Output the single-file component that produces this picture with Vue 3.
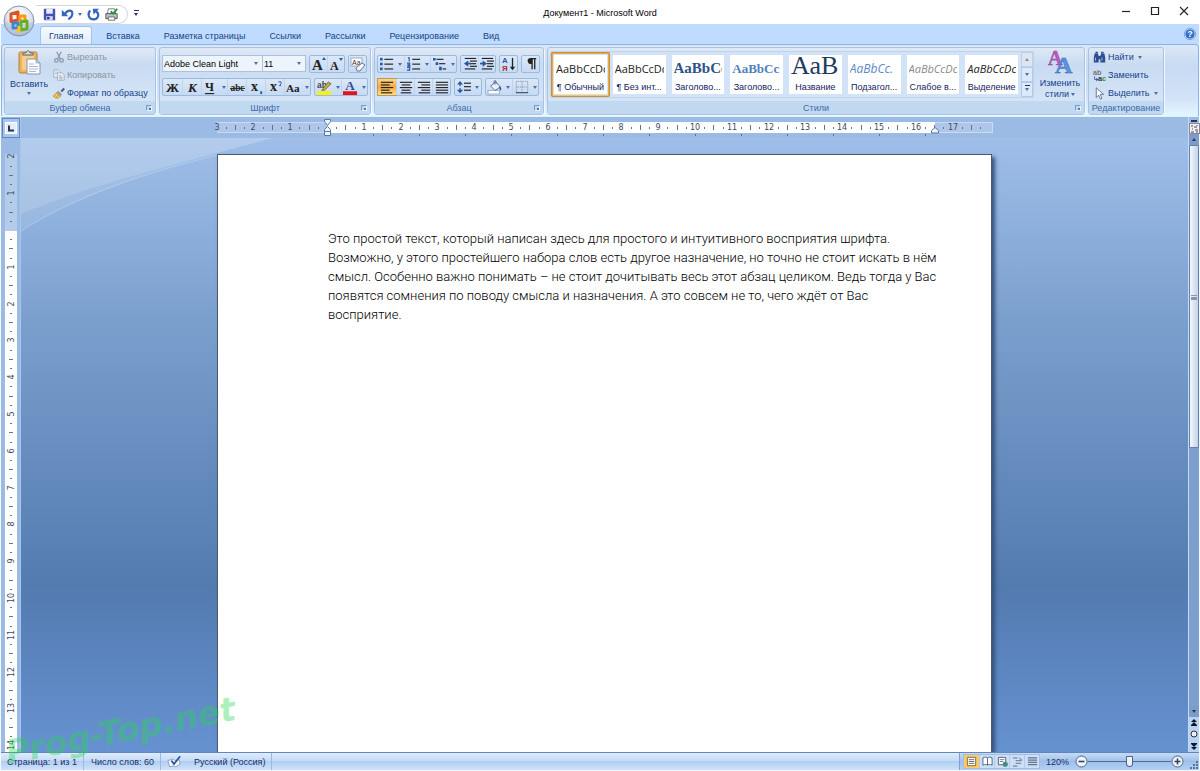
<template>
  <div class="word-window">
    <header class="title-bar">
      <button class="office-button" aria-label="Office">
        <svg viewBox="0 0 32 32" width="32" height="32" v-html="icons.office"></svg>
      </button>
      <div class="quick-access">
        <button v-for="item in quickItems" :key="item.label" :class="item.cls" :aria-label="item.label">
          <svg viewBox="0 0 16 16" width="13" height="13" v-html="icons[item.icon]"></svg>
          <i v-if="item.menu" class="arrow"></i>
        </button>
      </div>
      <button class="quick-more" aria-label="Настройка панели быстрого доступа"><i class="arrow dark barred"></i></button>
      <h1 class="title">Документ1 - Microsoft Word</h1>
      <div class="window-buttons">
        <button v-for="name in ['minimize', 'maximize', 'close']" :key="name" :aria-label="name">
          <svg viewBox="0 0 10 10" width="10" height="10" v-html="icons[name]"></svg>
        </button>
      </div>
    </header>

    <nav class="tabs">
      <button
        v-for="tab in tabs"
        :key="tab"
        class="tab"
        :class="{ active: tab === activeTab }"
        @click="activeTab = tab"
      >{{ tab }}</button>
      <button class="help" aria-label="Справка">
        <svg viewBox="0 0 12 12" width="12" height="12" v-html="icons.help"></svg>
      </button>
    </nav>

    <section class="ribbon">
      <div class="group clipboard">
        <div class="group-body">
          <button class="big-button">
            <svg viewBox="0 0 24 26" width="24" height="26" v-html="icons.paste"></svg>
            <span>Вставить</span>
            <i class="arrow"></i>
          </button>
          <div class="small-buttons">
            <button disabled><svg viewBox="0 0 16 16" width="12" height="12" v-html="icons.cut"></svg>Вырезать</button>
            <button disabled><svg viewBox="0 0 16 16" width="12" height="12" v-html="icons.copy"></svg>Копировать</button>
            <button><svg viewBox="0 0 16 16" width="12" height="12" v-html="icons.brush"></svg>Формат по образцу</button>
          </div>
        </div>
        <div class="group-label">Буфер обмена<i class="launcher"></i></div>
      </div>

      <div class="group font">
        <div class="group-body rows">
          <div class="row">
            <div class="combos">
              <label class="combo family">
                <select v-model="fontFamily" aria-label="Шрифт">
                  <option>Adobe Clean Light</option>
                </select>
                <i class="arrow"></i>
              </label>
              <label class="combo size">
                <select v-model="fontSize" aria-label="Размер шрифта">
                  <option>11</option>
                </select>
                <i class="arrow"></i>
              </label>
            </div>
            <div v-for="(set, n) in fontTop" :key="n" class="button-set">
              <button v-for="b in set" :key="b.icon" :class="b.cls" :aria-label="b.icon">
                <svg viewBox="0 0 16 16" width="16" height="16" v-html="icons[b.icon]"></svg>
              </button>
            </div>
          </div>
          <div class="row">
            <div v-for="(set, n) in fontBottom" :key="n" class="button-set">
              <button v-for="b in set" :key="b.icon" :class="b.cls" :aria-label="b.icon">
                <svg viewBox="0 0 16 16" width="15" height="15" v-html="icons[b.icon]"></svg>
                <i v-if="b.menu" class="arrow"></i>
              </button>
            </div>
          </div>
        </div>
        <div class="group-label">Шрифт<i class="launcher"></i></div>
      </div>

      <div class="group paragraph">
        <div class="group-body rows">
          <div v-for="(row, r) in paragraphRows" :key="r" class="row">
            <div v-for="(set, n) in row" :key="n" class="button-set">
              <button v-for="b in set" :key="b.icon" :class="b.cls" :aria-label="b.icon">
                <svg viewBox="0 0 16 16" width="14" height="14" v-html="icons[b.icon]"></svg>
                <i v-if="b.menu" class="arrow"></i>
              </button>
            </div>
          </div>
        </div>
        <div class="group-label">Абзац<i class="launcher"></i></div>
      </div>

      <div class="group styles">
        <div class="group-body">
          <div class="gallery">
            <button
              v-for="(style, n) in styles"
              :key="n"
              class="style-item"
              :class="{ selected: n === activeStyle }"
              @click="activeStyle = n"
            >
              <span class="card">
                <span class="sample" :class="style.cls">{{ style.sample }}</span>
                <span class="name">{{ style.name }}</span>
              </span>
            </button>
            <div class="gallery-scroll">
              <button aria-label="Вверх" disabled><i class="arrow up"></i></button>
              <button aria-label="Вниз"><i class="arrow"></i></button>
              <button aria-label="Ещё"><i class="arrow barred"></i></button>
            </div>
          </div>
          <button class="big-button change">
            <svg viewBox="0 0 26 26" width="26" height="26" v-html="icons.changeStyles"></svg>
            <span>Изменить</span>
            <span>стили<i class="arrow"></i></span>
          </button>
        </div>
        <div class="group-label">Стили<i class="launcher"></i></div>
      </div>

      <div class="group editing">
        <div class="group-body">
          <div class="small-buttons">
            <button><svg viewBox="0 0 16 16" width="13" height="13" v-html="icons.find"></svg>Найти<i class="arrow"></i></button>
            <button><svg viewBox="0 0 16 16" width="13" height="13" v-html="icons.replace"></svg>Заменить</button>
            <button><svg viewBox="0 0 16 16" width="13" height="13" v-html="icons.pointer"></svg>Выделить<i class="arrow"></i></button>
          </div>
        </div>
        <div class="group-label">Редактирование</div>
      </div>
    </section>

    <main class="workspace">
      <aside class="left-ruler">
        <button class="tab-stop" aria-label="Табуляция">
          <svg viewBox="0 0 12 12" width="12" height="12" v-html="icons.tabStop"></svg>
        </button>
        <svg class="v-ruler" width="12">
          <rect width="12" height="77" fill="#b4cbea" />
          <rect y="77" width="12" height="100%" fill="#fff" />
          <g v-for="m in verticalMarks" :key="m.pos">
            <text v-if="m.text" text-anchor="middle" :transform="`translate(9 ${m.pos}) rotate(-90)`">{{ m.text }}</text>
            <rect v-else :x="m.half ? 4 : 5" :y="m.pos" :width="m.half ? 4 : 2" height="1" fill="#66758f" />
          </g>
        </svg>
      </aside>

      <div class="center">
        <div class="top-ruler">
          <svg width="776" height="20" viewBox="0 0 776 20">
            <rect x="0" y="5" width="776" height="11" fill="#c9dbf3" />
            <rect x="0" y="6" width="775" height="9" fill="#aec7e9" />
            <rect x="110" y="5" width="608" height="11" fill="#fff" />
            <g v-for="m in horizontalMarks" :key="m.pos">
              <text v-if="m.text" :x="m.pos" y="13" text-anchor="middle">{{ m.text }}</text>
              <rect v-else :x="m.pos" :y="m.half ? 8 : 10" width="1" :height="m.half ? 5 : 2" fill="#66758f" />
            </g>
            <rect v-for="t in tabTicks" :key="t" :x="t" y="17" width="1" height="2" fill="#5c7396" />
            <g fill="#eef4fc" stroke="#5c78a8">
              <path d="M107.500 2.500h6v2l-3 4-3-4z" />
              <path d="M110.500 9.500l3 3v2h-6v-2z" />
              <path d="M107.500 14.500h6v4h-6z" />
              <path d="M718 10.500l3.500 3v2.500h-7v-2.500z" />
            </g>
          </svg>
        </div>
        <div class="canvas">
          <svg class="swoosh" width="260" height="100" viewBox="0 0 260 100">
            <path d="M0 0H252C150 27 60 55 0 93z" fill="#fff" opacity=".1" />
            <path d="M0 0H252C150 27 70 47 0 76z" fill="#fff" opacity=".13" />
            <path d="M0 93C55 58 120 36 200 16" fill="none" stroke="#c3d7f2" opacity=".5" />
          </svg>
          <article class="page">
            <p><span v-for="line in lines" :key="line">{{ line }}</span></p>
          </article>
        </div>
      </div>

      <aside class="scroll-column">
        <button class="split" aria-label="Разделить"></button>
        <button class="ruler-toggle" aria-label="Линейка">
          <svg viewBox="0 0 11 11" width="11" height="11" v-html="icons.rulerToggle"></svg>
        </button>
        <button class="scroll-arrow" aria-label="Прокрутить вверх"><i class="arrow dark up"></i></button>
        <div class="track">
          <div class="thumb"><i></i></div>
        </div>
        <button class="scroll-arrow" aria-label="Прокрутить вниз"><i class="arrow dark"></i></button>
        <div class="browse">
          <button v-for="name in ['prevPage', 'browseObject', 'nextPage']" :key="name" :aria-label="name">
            <svg viewBox="0 0 8 8" width="8" height="8" v-html="icons[name]"></svg>
          </button>
        </div>
      </aside>
    </main>

    <footer class="status-bar">
      <button class="status-cell">Страница: 1 из 1</button>
      <button class="status-cell words">Число слов: 60</button>
      <button class="status-cell language">
        <svg viewBox="0 0 16 14" width="14" height="13" v-html="icons.proof"></svg>
        Русский (Россия)
      </button>
      <div class="status-right">
        <div class="views">
          <button
            v-for="(view, n) in views"
            :key="view"
            :class="{ selected: n === 0 }"
            :aria-label="view"
          >
            <svg viewBox="0 0 12 12" width="11" height="11" v-html="icons[view]"></svg>
          </button>
        </div>
        <button class="percent">{{ zoom }}%</button>
        <button class="zoom-button" aria-label="Уменьшить" @click="zoom -= 10">
          <svg viewBox="0 0 13 13" width="13" height="13" v-html="icons.minus"></svg>
        </button>
        <input v-model.number="zoom" class="zoom-slider" type="range" min="40" max="200" aria-label="Масштаб" />
        <button class="zoom-button" aria-label="Увеличить" @click="zoom += 10">
          <svg viewBox="0 0 13 13" width="13" height="13" v-html="icons.plus"></svg>
        </button>
        <svg class="grip" viewBox="0 0 9 9" width="9" height="9" v-html="icons.grip"></svg>
      </div>
    </footer>

    <div class="watermark">Prog-Top.net</div>
  </div>
</template>

<script setup>
import { ref } from 'vue'

const tabs = ['Главная', 'Вставка', 'Разметка страницы', 'Ссылки', 'Рассылки', 'Рецензирование', 'Вид']
const activeTab = ref('Главная')
const activeStyle = ref(0)
const fontFamily = ref('Adobe Clean Light')
const fontSize = ref('11')
const zoom = ref(120)

const quickItems = [
  { label: 'Сохранить', icon: 'save' },
  { label: 'Отменить', icon: 'undo', menu: true, cls: 'undo' },
  { label: 'Повторить', icon: 'redo' },
  { label: 'Быстрая печать', icon: 'print' }
]

const fontTop = [
  [{ icon: 'grow' }, { icon: 'shrink' }],
  [{ icon: 'clearFormat' }]
]

const fontBottom = [
  [
    { icon: 'bold' },
    { icon: 'italic' },
    { icon: 'underline', menu: true, cls: 'menu' },
    { icon: 'strike' },
    { icon: 'sub' },
    { icon: 'sup' },
    { icon: 'changeCase', menu: true, cls: 'menu' }
  ],
  [
    { icon: 'highlight', menu: true, cls: 'menu' },
    { icon: 'fontColor', menu: true, cls: 'menu' }
  ]
]

const paragraphRows = [
  [
    [
      { icon: 'bullets', menu: true, cls: 'menu' },
      { icon: 'numbers', menu: true, cls: 'menu' },
      { icon: 'multilevel', menu: true, cls: 'menu' }
    ],
    [{ icon: 'outdent' }, { icon: 'indent' }],
    [{ icon: 'sort' }],
    [{ icon: 'marks' }]
  ],
  [
    [
      { icon: 'alignLeft', cls: 'selected' },
      { icon: 'alignCenter' },
      { icon: 'alignRight' },
      { icon: 'justify' }
    ],
    [{ icon: 'spacing', menu: true, cls: 'menu' }],
    [
      { icon: 'fill', menu: true, cls: 'menu' },
      { icon: 'borders', menu: true, cls: 'menu' }
    ]
  ]
]

const styles = [
  { sample: 'AaBbCcDc', name: '¶ Обычный', cls: 'plain' },
  { sample: 'AaBbCcDc', name: '¶ Без инт...', cls: 'plain' },
  { sample: 'AaBbCс', name: 'Заголово...', cls: 'heading1' },
  { sample: 'AaBbCc', name: 'Заголово...', cls: 'heading2' },
  { sample: 'АаВ', name: 'Название', cls: 'heading0' },
  { sample: 'AaBbCc.', name: 'Подзагол...', cls: 'subtitle' },
  { sample: 'AaBbCcDc', name: 'Слабое в...', cls: 'weak' },
  { sample: 'AaBbCcDc', name: 'Выделение', cls: 'emphasis' }
]

const lines = [
  'Это простой текст, который написан здесь для простого и интуитивного восприятия шрифта.',
  'Возможно, у этого простейшего набора слов есть другое назначение, но точно не стоит искать в нём',
  'смысл. Особенно важно понимать – не стоит дочитывать весь этот абзац целиком. Ведь тогда у Вас',
  'появятся сомнения по поводу смысла и назначения. А это совсем не то, чего ждёт от Вас',
  'восприятие.'
]

const views = ['viewPage', 'viewRead', 'viewWeb', 'viewOutline', 'viewDraft']

// деления линейки: цифра на сантиметре, штрих на половине, точки на четвертях
const CM = 36.8

function makeMarks(zero, from, to) {
  const marks = []
  for (let q = from; q <= to; q++) {
    if (q === 0) continue
    const pos = Math.round(zero + (q * CM) / 4)
    marks.push({
      pos,
      text: q % 4 === 0 ? String(Math.abs(q / 4)) : '',
      half: q % 2 === 0
    })
  }
  return marks
}

const horizontalMarks = makeMarks(110, -12, 71)
const verticalMarks = makeMarks(76, -8, 120)
const tabTicks = Array.from({ length: 13 }, (_, n) => Math.round(110 + (n + 1) * 46))

const bars = (rows, color = '#222') =>
  rows.map(([x, y, w]) => `<rect x="${x}" y="${y}" width="${w}" height="1.300" fill="${color}"/>`).join('')

const glyph = (text, x, y, size, extra = '') =>
  `<text x="${x}" y="${y}" font-size="${size}" font-family="Liberation Serif, serif" fill="#222" ${extra}>${text}</text>`

const icons = {
  office: `<defs><radialGradient id="orb" cx=".5" cy=".3" r=".75"><stop offset="0" stop-color="#fff"/><stop offset=".55" stop-color="#dfe5ee"/><stop offset="1" stop-color="#93a4be"/></radialGradient></defs>
    <circle cx="16" cy="16" r="15" fill="url(#orb)" stroke="#8393ae"/>
    <path d="M3 17a13 13 0 0 0 26 0c-7 3-19 3-26 0z" fill="#b7c6dd" opacity=".6"/>
    <g fill="none" stroke-width="3" stroke-linejoin="round">
    <path d="M8 9l7-2v8l-7 1.500z" stroke="#e0521d"/><path d="M17 11h5v5h-5z" stroke="#f39c1c"/>
    <path d="M10 18h5v5h-5z" stroke="#3c87d0"/><path d="M18 17l6-1v8l-6 1z" stroke="#68ae27"/>
    <path d="M16 21v5h-3" stroke="#f4c52c"/></g>`,
  save: `<path d="M1 1h14v14H2l-1-1z" fill="#4a51b5"/><path d="M4 1h8v6H4z" fill="#e9edfb"/><path d="M4 10h8v5H4z" fill="#cfd5ee"/><path d="M5 11h3v3H5z" fill="#30378c"/>`,
  undo: `<path d="M1 2v8h8z" fill="#3465c0"/><path d="M5 7c3-5 9-5 9 0 0 3-2 5-5 7" fill="none" stroke="#3465c0" stroke-width="2.600"/>`,
  redo: `<path d="M4 3c-4 4-2 11 4 11s8-7 3-10" fill="none" stroke="#3465c0" stroke-width="2.600"/><path d="M7 1h8l-7 7z" fill="#3465c0"/>`,
  print: `<path d="M4 1h8l1 6H3z" fill="#fff" stroke="#666"/><path d="M1 7h14v6H1z" fill="#bfc3c9" stroke="#444"/><path d="M4 11h8v4H4z" fill="#fff" stroke="#555"/><path d="M7 4l3 3 5-6" fill="none" stroke="#28963a" stroke-width="2.200"/>`,
  minimize: '<path d="M1 5.500h8" stroke="#222" stroke-width="1.200"/>',
  maximize: '<path d="M1.500 1.500h7v7h-7z" fill="none" stroke="#222" stroke-width="1.200"/>',
  close: '<path d="M1 1l8 8M9 1L1 9" stroke="#222" stroke-width="1.100"/>',
  help: `<circle cx="6" cy="6" r="5.200" fill="#2f6fd0" stroke="#e8f1ff"/><circle cx="6" cy="6" r="5.700" fill="none" stroke="#5379b5" stroke-width=".6"/><text x="6" y="9.300" text-anchor="middle" font-size="9" font-weight="bold" font-family="Liberation Sans, sans-serif" fill="#fff">?</text>`,
  paste: `<rect x="2" y="3" width="18" height="21" rx="1.500" fill="#e9b562" stroke="#b98032"/><path d="M5 7h12v14H5z" fill="#f5cf8c"/><path d="M6 6V4h3c0-3 4-3 4 0h3v2z" fill="#d6d9de" stroke="#666d78"/><path d="M10 10h9l4 4v11H10z" fill="#fff" stroke="#8894aa"/><path d="M19 10v4h4z" fill="#ccd6e6" stroke="#8894aa" stroke-width=".7"/><path d="M12 15h5M12 17.500h9M12 20h9M12 22.500h7" stroke="#a7b7d2"/>`,
  cut: `<g fill="none" stroke="#8f9aab" stroke-width="1.800"><path d="M5 1l5 10M11 1L6 11"/><circle cx="4.500" cy="12.500" r="2.300"/><circle cx="11.500" cy="12.500" r="2.300"/></g>`,
  copy: `<g fill="#e8edf5" stroke="#98a4b8"><path d="M1 1h6l3 3v7H1z"/><path d="M6 5h6l3 3v7H6z"/></g><path d="M8 9h3M8 11h5M8 13h5M3 4h3M3 6h2" stroke="#98a4b8"/>`,
  brush: `<path d="M10 5l4-4 2 2-4 4z" fill="#4e5c86"/><path d="M7 5l5 5-2 2-5-5z" fill="#8d99c2"/><path d="M5 7l5 5c-1 2-3 3-6 3l-4-3c2-1 3-3 5-5z" fill="#eecb47" stroke="#a37e21" stroke-width=".8"/><path d="M3 11l3 3M5 9l3 3" stroke="#a37e21" stroke-width=".7"/>`,
  grow: glyph('A', 1, 14, 15, 'font-weight="bold"') + '<path d="M11 4l2-3 2 3z" fill="#2b56a8"/>',
  shrink: glyph('A', 2, 14, 12, 'font-weight="bold"') + '<path d="M11 2h4l-2 3z" fill="#2b56a8"/>',
  clearFormat: `<rect x="1" y="2" width="11" height="8" fill="#fff" stroke="#7b8dab" stroke-width=".7"/><text x="2" y="8.500" font-size="7" font-family="Liberation Sans, sans-serif" fill="#333">Aa</text><path d="M6 12l6-5 3 2-5 6H7z" fill="#f6f7fb" stroke="#68779a"/>`,
  bold: glyph('Ж', 8, 13, 14, 'font-weight="bold" text-anchor="middle"'),
  italic: glyph('К', 8, 13, 14, 'font-weight="bold" font-style="italic" text-anchor="middle"'),
  underline: glyph('Ч', 7, 12, 13, 'font-weight="bold" text-anchor="middle"') + '<path d="M2 14.500h10" stroke="#222" stroke-width="1.200"/>',
  strike: glyph('abc', 8, 12, 10, 'text-anchor="middle" font-weight="bold"') + '<path d="M0 9h16" stroke="#222"/>',
  sub: glyph('x', 2, 12, 15, 'font-weight="bold"') + '<path d="M12 12h2v3h-2z" fill="#2b56a8"/>',
  sup: glyph('x', 2, 12, 15, 'font-weight="bold"') + '<path d="M11 2h3v2l-2 2h2" stroke="#2b56a8" fill="none"/>',
  changeCase: glyph('Aa', 0, 13, 12, 'font-weight="bold"'),
  highlight: `<rect x="0" y="12" width="15" height="4" fill="#f9f10a"/><text x="0" y="8" font-size="9" font-weight="bold" font-family="Liberation Sans, sans-serif" fill="#444">ab</text><path d="M5 11l7-9 3 2-7 7z" fill="#c9ad36" stroke="#5c5a48" stroke-width=".8"/>`,
  fontColor: `<rect x="0" y="12" width="15" height="4" fill="#e3121d"/>` + glyph('A', 7.500, 11, 14, 'text-anchor="middle" font-weight="bold"').replace('#222', '#2d4f9c'),
  bullets: '<g fill="#2b56a8"><rect y="1" width="3" height="3"/><rect y="6.500" width="3" height="3"/><rect y="12" width="3" height="3"/></g>' + bars([[5, 2, 10], [5, 7.500, 10], [5, 13, 10]]),
  numbers: '<g stroke="#2b56a8" stroke-width="1.300" fill="none"><path d="M1 1h1.500v4M0 7h3v2H1v1.500h3M0 12h3v3H0"/></g>' + bars([[6, 2, 9], [6, 7.500, 9], [6, 13, 9]]),
  multilevel: '<g fill="#2b56a8"><path d="M0 1h3v3H0zM3 6h3v3H3zM7 11h3v4H7z"/></g>' + bars([[4, 2, 8], [7, 7, 7], [11, 13, 4]]),
  outdent: bars([[2, 1, 13], [8, 4, 8], [8, 7, 7], [8, 10, 8], [2, 13, 12]]) + '<path d="M6 4v7L1 7.500z" fill="#2b56a8"/><path d="M5 7.500h4" stroke="#2b56a8" stroke-width="2"/>',
  indent: bars([[2, 1, 13], [8, 4, 8], [8, 7, 7], [8, 10, 8], [2, 13, 12]]) + '<path d="M3 4v7l5-3.500z" fill="#2b56a8"/><path d="M0 7.500h4" stroke="#2b56a8" stroke-width="2"/>',
  sort: `<g font-family="Liberation Sans, sans-serif" font-size="9" font-weight="bold"><text x="0" y="7" fill="#2b56a8">А</text><text x="0" y="16" fill="#b02a37">Я</text></g><path d="M12 1v12" stroke="#222" stroke-width="1.500"/><path d="M9 11h6l-3 4z" fill="#222"/>`,
  marks: '<path d="M7 1h7v1.500h-1V14h-1.500V2.500H10V14H8.500V8a3.500 3.500 0 0 1-1.500-7z" fill="#222"/>',
  alignLeft: bars([[1, 2, 14], [1, 5, 10], [1, 8, 14], [1, 11, 10], [1, 14, 13]]),
  alignCenter: bars([[1, 2, 14], [3, 5, 10], [1, 8, 14], [3, 11, 10], [2, 14, 12]]),
  alignRight: bars([[1, 2, 14], [5, 5, 10], [1, 8, 14], [5, 11, 10], [2, 14, 13]]),
  justify: bars([[1, 2, 14], [1, 5, 14], [1, 8, 14], [1, 11, 14], [1, 14, 14]]),
  spacing: bars([[8, 3, 8], [8, 7, 8], [8, 11, 8]]) + '<path d="M3.500 3v10" stroke="#2b56a8" stroke-width="1.400" stroke-dasharray="4 2"/><path d="M0 5l3.500-4L7 5zM0 11h7l-3.500 4z" fill="#2b56a8"/>',
  fill: '<rect x="0" y="12" width="13" height="4" fill="#fff" stroke="#8b99b3" stroke-width=".8"/><path d="M3 7l6-5 5 6-6 4z" fill="#eaf0f9" stroke="#4f658f"/><path d="M7 5V1h2v4" fill="none" stroke="#4f658f"/><path d="M13 7c2 1 3 3 1.500 5-1.500-1-2-3-1.500-5z" fill="#2b56a8"/>',
  borders: '<g fill="none" stroke="#6f7f9c"><path d="M1.500 1.500h13v13h-13z" stroke-dasharray="1 1"/><path d="M8 2v12M2 8h12" stroke-dasharray="1 1"/><path d="M1 14.500h14" stroke="#333"/></g>',
  changeStyles: `<g font-family="Liberation Serif, serif" font-weight="bold"><text x="1" y="16" font-size="20" fill="#b75bc0" stroke="#8c3c98" stroke-width=".4">A</text><text x="8" y="24" font-size="24" fill="#5c93e0" stroke="#3765b4" stroke-width=".5">A</text></g>`,
  find: '<g fill="#2c4f91"><path d="M2 3h4l1 3v8H1V8zM10 3h4l1 5v6H9V6z"/><path d="M6 6h4v4H6zM3 1h3v2H3zM10 1h3v2h-3z"/></g><path d="M3 8v4M11 8v4" stroke="#b8cdf0"/>',
  replace: `<g font-family="Liberation Sans, sans-serif" font-weight="bold" font-size="9"><text x="0" y="7" fill="#777">ab</text><text x="6" y="15" fill="#333">a<tspan fill="#259a35">c</tspan></text></g><path d="M2 9v4h3" fill="none" stroke="#2b56a8"/><path d="M4 11l3 2-3 2z" fill="#2b56a8"/>`,
  pointer: '<path d="M4 1v12l3-3 2 5 2-1-2-5h4z" fill="#fff" stroke="#4f6187"/>',
  tabStop: '<rect x=".5" y=".5" width="11" height="11" fill="#e4eefb" stroke="#fff"/><path d="M4 3.500v5h5" fill="none" stroke="#27344c" stroke-width="2"/>',
  rulerToggle: '<rect x=".5" y=".5" width="10" height="10" fill="#f3f1f4" stroke="#8c8792"/><path d="M2 3h2M5 4h3M3 6h1M6 7h3M2 9h3M8 2v1M7 9h2" stroke="#4d4750"/>',
  prevPage: '<path d="M4 0l3 3H1zM4 3l3 3H1zM1 6h6v1H1z" fill="#101828"/>',
  browseObject: '<circle cx="4" cy="4" r="3" fill="#e9eef5" stroke="#333"/>',
  nextPage: '<path d="M1 1h6v1H1zM1 2h6L4 5zM1 5h6L4 8z" fill="#101828"/>',
  proof: '<path d="M1 6l6-2 2 2 5-1 1 5-5 3-3-1-4 1z" fill="#f5f7fb" stroke="#7586a3" stroke-width=".8"/><path d="M5 6l3 4 7-9" fill="none" stroke="#2b56a8" stroke-width="2"/>',
  viewPage: '<path d="M1.500 1.500h9v9h-9z" fill="#fff" stroke="#7a6a3c"/><path d="M3 4h6M3 6h6M3 8h6" stroke="#666"/>',
  viewRead: '<path d="M1 2c2-1 4-1 5 0 1-1 3-1 5 0v8c-2-1-4-1-5 0-1-1-3-1-5 0z" fill="#fff" stroke="#4a5c7c"/><path d="M6 2v8" stroke="#4a5c7c"/>',
  viewWeb: '<path d="M1.500 1.500h8v8h-8z" fill="#fff" stroke="#4a5c7c"/><path d="M3 4h5M3 6h4" stroke="#777"/><circle cx="9" cy="9" r="2.800" fill="#3d8e85"/>',
  viewOutline: '<path d="M1 2h5M4 5h6M4 8h6M1 11h5M8 2l3 3" stroke="#7c8aa2" stroke-width="1.200"/>',
  viewDraft: '<path d="M1 2h10M1 4.500h10M1 7h10M1 9.500h10" stroke="#66738c" stroke-width="1.300"/>',
  minus: '<circle cx="6.500" cy="6.500" r="5.500" fill="#eef4fc" stroke="#4f6384"/><path d="M3.500 6.500h6" stroke="#33435f" stroke-width="1.600"/>',
  plus: '<circle cx="6.500" cy="6.500" r="5.500" fill="#eef4fc" stroke="#4f6384"/><path d="M3.500 6.500h6M6.500 3.500v6" stroke="#33435f" stroke-width="1.600"/>',
  grip: '<path d="M7 1h2v2H7zM4 4h2v2H4zM7 4h2v2H7zM1 7h2v2H1zM4 7h2v2H4zM7 7h2v2H7z" fill="#5c7396"/>'
}
</script>

<style>
body {
  margin: 0;
}
</style>

<style scoped>
.word-window {
  position: relative;
  display: flex;
  flex-direction: column;
  height: 100vh;
  box-sizing: border-box;
  padding: 0 1px 1px;
  overflow: hidden;
  background: #f4f9ff;
  font-family: 'Liberation Sans', sans-serif;
  font-size: 9px;
  line-height: 12px;
  color: #15428b;
}

button {
  display: flex;
  align-items: center;
  justify-content: center;
  padding: 0;
  border: 0;
  background: none;
  color: inherit;
  font: inherit;
  white-space: nowrap;
}

svg {
  flex: none;
  overflow: visible;
}

.arrow {
  flex: none;
  width: 0;
  height: 0;
  border: 2px solid transparent;
  border-top: 3px solid #4a70ad;
  border-bottom: 0;
}

.arrow.up {
  border-top: 0;
  border-bottom: 3px solid #4a70ad;
}

.arrow.dark {
  border-top-color: #24365c;
}

.arrow.dark.up {
  border-bottom-color: #24365c;
}

.arrow.barred {
  position: relative;
}

.arrow.barred::before {
  content: '';
  position: absolute;
  left: -2px;
  top: -6px;
  width: 5px;
  height: 1px;
  background: #24365c;
}

/* заголовок */
.title-bar {
  position: relative;
  display: flex;
  align-items: center;
  height: 24px;
  margin: 0 -1px;
  background: #fff;
}

.office-button {
  position: absolute;
  z-index: 2;
  left: 3px;
  top: 5px;
}

.quick-access {
  display: flex;
  align-items: center;
  gap: 5px;
  height: 17px;
  margin: 4px 0 0 36px;
  padding: 0 9px 0 7px;
  border: 1px solid #d3d7de;
  border-left: 0;
  border-radius: 0 10px 10px 0;
}

.quick-access .undo {
  gap: 4px;
}

.quick-more {
  width: 16px;
  padding-top: 4px;
}

.title {
  position: absolute;
  left: 0;
  right: 0;
  top: 7px;
  margin: 0 auto;
  width: fit-content;
  color: #000;
  font-size: 9px;
  font-weight: normal;
}

.window-buttons {
  display: flex;
  gap: 19px;
  margin: 0 11px 3px auto;
}

/* вкладки */
.tabs {
  display: flex;
  align-items: flex-end;
  height: 20px;
  padding: 0 3px 0 39px;
  background: #bfdbff;
}

.tab {
  height: 18px;
  padding: 0 11px;
  border: 1px solid transparent;
  border-bottom: 0;
}

.tab.active {
  padding: 0 8px;
  margin-right: 2px;
  border-color: #a5c3ea;
  border-radius: 3px 3px 0 0;
  background: linear-gradient(#f5faff, #e2edfa);
}

.help {
  height: 20px;
  margin-left: auto;
}

/* лента */
.ribbon {
  display: flex;
  gap: 3px;
  height: 73px;
  box-sizing: border-box;
  padding: 2px 2px 1px;
  border: 1px solid #8db2e3;
  border-bottom-color: #d9f4ff;
  border-radius: 3px;
  background: linear-gradient(#dbe7f5, #c7dbf3 30%, #d2e3f8 75%, #e2f6ff);
}

.group {
  display: flex;
  flex-direction: column;
  box-sizing: border-box;
  border: 1px solid #a9c3e4;
  border-radius: 3px;
  background: linear-gradient(#dfe9f6, #c9dbf1 25%, #d9e8f9);
  box-shadow: 1px 1px 0 #f0f7ff;
}

.group-body {
  flex: 1;
  display: flex;
  min-height: 0;
}

.group-label {
  display: flex;
  align-items: center;
  justify-content: center;
  position: relative;
  height: 13px;
  background: #c1d8f1;
  color: #3e6aaa;
}

.launcher {
  position: absolute;
  right: 3px;
  top: 4px;
  width: 4px;
  height: 4px;
  border: 1px solid #7d9bc8;
  border-right-color: #e9f2fd;
  border-bottom-color: #e9f2fd;
}

.launcher::after {
  content: '';
  position: absolute;
  right: 0;
  bottom: 0;
  width: 2px;
  height: 2px;
  background: #5276ae;
}

.clipboard {
  flex: 0 0 152px;
}

.font {
  flex: 0 0 212px;
}

.paragraph {
  flex: 0 0 170px;
}

.styles {
  flex: 0 1 538px;
  min-width: 0;
}

.editing {
  flex: 0 0 76px;
}

.big-button {
  flex-direction: column;
  justify-content: flex-start;
  width: 48px;
  padding-top: 1px;
}

.big-button span {
  margin-top: 3px;
}

.big-button > .arrow {
  margin-top: 2px;
}

.small-buttons {
  display: flex;
  flex-direction: column;
  gap: 6px;
  padding-top: 3px;
}

.small-buttons button {
  justify-content: flex-start;
  gap: 2px;
  height: 12px;
}

.small-buttons button:disabled {
  color: #8d95a3;
}

.small-buttons .arrow {
  margin-left: 2px;
}

.editing .small-buttons {
  padding-left: 4px;
}

.rows {
  flex-direction: column;
  gap: 5px;
  padding: 7px 2px 0;
}

.row {
  display: flex;
  gap: 3px;
  height: 18px;
}

.button-set {
  display: flex;
  box-sizing: border-box;
  border: 1px solid #9cb9de;
  border-radius: 2px;
  background: linear-gradient(#dbe8f8, #c6daf3);
}

.button-set button {
  width: 17px;
}

.button-set button + button {
  border-left: 1px solid #c1d4ee;
}

.paragraph .row:last-child button {
  width: 18px;
}

.font .row:last-child button {
  width: 19px;
}

.button-set button.menu,
.font .row:last-child button.menu,
.paragraph .row:last-child button.menu {
  width: 26px;
  gap: 4px;
}

.button-set .selected {
  background: linear-gradient(#fdd48c, #f9a73c 50%, #fde28a);
  box-shadow: 0 0 0 1px #c2984e;
}

.combos {
  display: flex;
  height: 17px;
}

.combo {
  position: relative;
  display: flex;
  align-items: center;
  box-sizing: border-box;
  border: 1px solid #abc1de;
  background: #eef4fc;
}

.combo select {
  width: 100%;
  padding: 0 1px;
  border: 0;
  appearance: none;
  background: none;
  color: #000;
  font: inherit;
}

.combo .arrow {
  position: absolute;
  right: 4px;
  top: 6px;
}

.combo.family {
  width: 101px;
}

.combo.size {
  width: 44px;
  margin-left: -1px;
}

/* галерея стилей */
.gallery {
  flex: 1;
  display: flex;
  min-width: 0;
  margin: 3px 2px 3px 2px;
  border: 1px solid #c0d3ec;
  border-radius: 2px;
  background: #d3e3f7;
}

.style-item {
  flex: 1;
  min-width: 0;
  align-items: stretch;
  padding: 3px;
}

.style-item.selected {
  padding: 1px;
  border: 2px solid #eea83f;
  border-bottom-color: #f6c659;
  border-radius: 2px;
  outline: 1px solid #c9923e;
  outline-offset: -1px;
}

.card {
  flex: 1;
  display: flex;
  flex-direction: column;
  min-width: 0;
  background: #fff;
  color: #14215c;
}

.sample {
  height: 26px;
  margin: 0 2px;
  overflow: hidden;
  color: #222;
  text-align: left;
  font-family: 'Open Sans', sans-serif;
  font-size: 11px;
  line-height: 27px;
}

.heading1,
.heading2,
.heading0 {
  font-family: 'Liberation Serif', serif;
  font-size: 15px;
  font-weight: bold;
  color: #2e5487;
}

.heading2 {
  font-size: 13px;
  color: #4f81bd;
}

.heading0 {
  font-size: 26px;
  line-height: 22px;
  font-weight: normal;
  color: #1d3a60;
}

.subtitle {
  font-family: 'Open Sans', sans-serif;
  font-size: 12px;
  font-style: italic;
  color: #5a8ac6;
}

.weak {
  font-style: italic;
  color: #8a8a8a;
}

.emphasis {
  font-style: italic;
}

.gallery-scroll {
  display: flex;
  flex-direction: column;
  width: 12px;
}

.gallery-scroll button {
  flex: 1;
  border: 1px solid #b4cae8;
  background: #dce9f9;
}

.gallery-scroll button:disabled {
  background: #e3e6ea;
  opacity: .7;
}

.change span {
  display: flex;
  align-items: center;
  gap: 2px;
  margin-top: 0;
  line-height: 11px;
}

.change svg + span {
  margin-top: 3px;
}

/* рабочая область */
.workspace {
  flex: 1;
  display: flex;
  min-height: 0;
  background: #9cbbe4;
}

.left-ruler {
  display: flex;
  flex-direction: column;
  align-items: center;
  box-sizing: border-box;
  width: 20px;
  border-right: 1px solid #a9c5ea;
}

.tab-stop {
  width: 18px;
  height: 20px;
  margin: 1px 0 16px;
  box-sizing: border-box;
  border: 1px solid #5f86c3;
  background: #a9c5ec;
}

.v-ruler {
  flex: 1;
  min-height: 0;
  overflow: hidden;
}

.v-ruler text,
.top-ruler text {
  font-family: 'DejaVu Sans', sans-serif;
  font-size: 8px;
  fill: #3b4a63;
}

.center {
  flex: 1;
  display: flex;
  flex-direction: column;
  min-width: 0;
}

.top-ruler {
  display: flex;
  justify-content: center;
  height: 21px;
}

.canvas {
  position: relative;
  flex: 1;
  display: flex;
  justify-content: center;
  min-height: 0;
  padding-top: 16px;
  overflow: hidden;
  background: linear-gradient(#9fbfe9, #7b9fcd 30%, #537bb0 73%, #6692d1);
}

.swoosh {
  position: absolute;
  left: 0;
  top: 0;
}

.page {
  position: relative;
  width: 775px;
  box-sizing: border-box;
  padding: 74px 20px 0 110px;
  border: 1px solid #4c5a6e;
  border-bottom: 0;
  background: #fff;
  box-shadow: 3px 3px 4px #34527e;
}

.page p {
  margin: 0;
  color: #000;
  font-family: Roboto, 'Open Sans', sans-serif;
  font-size: 13px;
  font-weight: 300;
  line-height: 19px;
}

.page span {
  display: block;
  white-space: nowrap;
}

/* прокрутка */
.scroll-column {
  display: flex;
  flex-direction: column;
  align-items: stretch;
  width: 10px;
  border-left: 1px solid #c6daf4;
}

.split {
  height: 2px;
  margin: 3px 2px 1px;
  background: #24365c;
}

.scroll-arrow {
  height: 11px;
  background: #7c9cc9;
}

.track {
  flex: 1;
  display: flex;
  flex-direction: column;
  background: #7d9fce;
}

.thumb {
  display: flex;
  align-items: center;
  justify-content: center;
  height: 54%;
  box-sizing: border-box;
  border: 1px solid #6480ac;
  border-radius: 1px;
  background: linear-gradient(90deg, #f4f8fd, #dbe5f2 50%, #c4d3e8);
}

.thumb i {
  width: 6px;
  height: 1px;
  border-top: 1px solid #8796ae;
  border-bottom: 1px solid #8796ae;
  box-shadow: 0 2px 0 #8796ae;
}

.browse {
  display: flex;
  flex-direction: column;
  justify-content: space-around;
  height: 35px;
  background: #b8d2f3;
}

/* строка состояния */
.status-bar {
  display: flex;
  height: 18px;
  box-sizing: border-box;
  border-top: 1px solid #5f86bf;
  background: linear-gradient(#e0edfc, #c5dbf6 45%, #b1cef2 50%, #cfe3fb);
  color: #1b2c66;
}

.status-cell {
  padding: 0 6px;
  border-right: 1px solid #9cb9df;
}

.status-cell.words {
  padding: 0 6px 0 7px;
}

.language {
  gap: 13px;
}

.status-right {
  display: flex;
  align-items: center;
  margin-left: auto;
  padding-left: 3px;
  border-left: 1px solid #7f9fcf;
  background: linear-gradient(#c5dbf5, #9fc0ea 50%, #b3d0f3);
}

.views {
  display: flex;
  height: 15px;
  box-sizing: border-box;
  border: 1px solid #a3bee2;
  background: #cbdff7;
}

.views button {
  width: 15px;
}

.views button + button {
  border-left: 1px solid #b5cbe9;
}

.views .selected {
  background: #fbc868;
}

.percent {
  width: 35px;
}

.zoom-slider {
  width: 83px;
  height: 13px;
  margin: 0;
  appearance: none;
  background: linear-gradient(#4f6b96, #4f6b96) center / 100% 1px no-repeat;
}

.zoom-slider::-webkit-slider-thumb {
  appearance: none;
  width: 7px;
  height: 11px;
  border: 1px solid #4f6384;
  border-radius: 1px 1px 4px 4px;
  background: #eaf2fc;
}

.grip {
  align-self: flex-end;
  margin: 0 1px 1px 5px;
}

.watermark {
  position: absolute;
  left: 4px;
  bottom: 25px;
  color: rgba(40, 215, 80, .4);
  font-family: 'DejaVu Sans', sans-serif;
  font-size: 33px;
  font-weight: bold;
  font-style: italic;
  line-height: 30px;
  transform: rotate(-11deg);
  pointer-events: none;
}
</style>
